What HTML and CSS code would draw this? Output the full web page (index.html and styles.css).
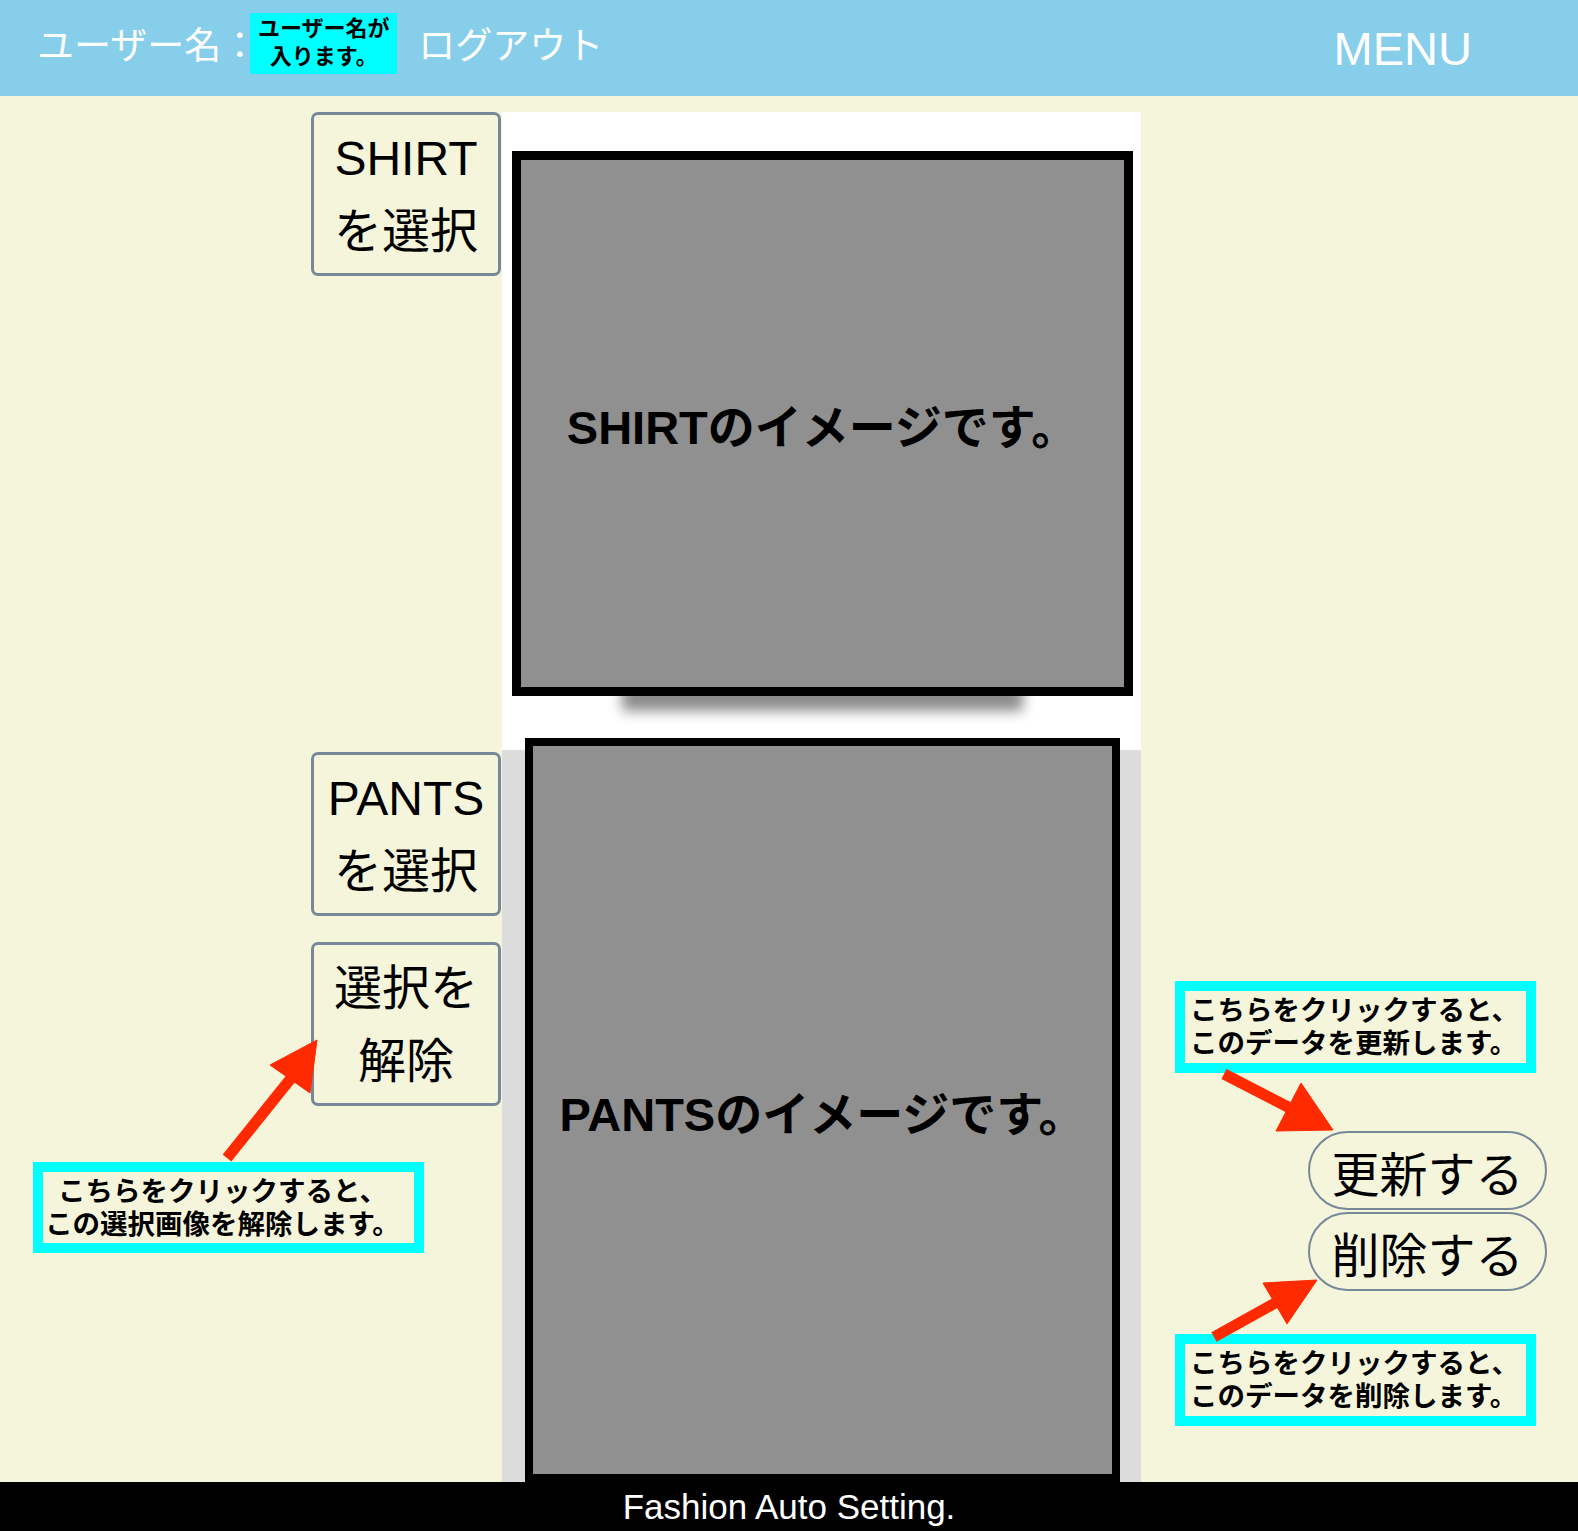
FILE: index.html
```html
<!DOCTYPE html>
<html lang="ja">
<head>
<meta charset="utf-8">
<title>Fashion Auto Setting</title>
<link rel="stylesheet" href="styles.css">
</head>
<body>
<header class="header">
  <span class="user-label">ユーザー名：</span>
  <div class="user-name">ユーザー名が<br>入ります。</div>
  <span class="logout">ログアウト</span>
  <span class="menu">MENU</span>
</header>
<main class="main">
  <div class="left">
    <div class="sel-btn">SHIRT<br>を選択</div>
    <div class="sel-btn pants-btn">PANTS<br>を選択</div>
    <div class="sel-btn clear-btn">選択を<br>解除</div>
    <div class="note note-left">こちらをクリックすると、<br>この選択画像を解除します。</div>
  </div>
  <div class="center">
    <div class="shirt-area">
      <div class="image-box shirt-box">SHIRTのイメージです。</div>
    </div>
    <div class="pants-area">
      <div class="image-box pants-box">PANTSのイメージです。</div>
    </div>
  </div>
  <div class="right">
    <div class="note note-right note-update">こちらをクリックすると、<br>このデータを更新します。</div>
    <div class="pill update-btn">更新する</div>
    <div class="pill delete-btn">削除する</div>
    <div class="note note-right note-delete">こちらをクリックすると、<br>このデータを削除します。</div>
  </div>
</main>
<footer class="footer">Fashion Auto Setting.</footer>
<svg class="arrows" width="1578" height="1531" viewBox="0 0 1578 1531" aria-hidden="true">
  <g fill="#ff2a00" stroke="#ff2a00">
    <line x1="227" y1="1158" x2="292" y2="1077" stroke-width="11"/>
    <polygon points="317,1040 270,1065 310,1093" stroke-width="1"/>
    <line x1="1224" y1="1074" x2="1290" y2="1108" stroke-width="11"/>
    <polygon points="1333,1130 1276,1131 1301,1083" stroke-width="1"/>
    <line x1="1214" y1="1337" x2="1277" y2="1302" stroke-width="11"/>
    <polygon points="1317,1280 1263,1283 1287,1324" stroke-width="1"/>
  </g>
</svg>
</body>
</html>
```
FILE: styles.css
```css
* {
  box-sizing: border-box;
}

body {
  margin: 0;
  width: 1578px;
  height: 1531px;
  overflow: hidden;
  position: relative;
  background: #f5f5dc;
  color: #000;
  font-family: "Liberation Sans", "Noto Sans CJK JP", sans-serif;
}

/* header */
.header {
  height: 96px;
  background: #87ceeb;
  display: flex;
  align-items: center;
  padding-left: 37px;
  color: #fff;
}

.user-label {
  font-size: 37px;
  line-height: 1;
  margin-top: -3px;
}

.user-name {
  align-self: flex-start;
  margin-top: 13px;
  margin-left: -8px;
  width: 147px;
  height: 61px;
  padding-top: 2px;
  background: #00ffff;
  color: #000;
  font-size: 22px;
  font-weight: 700;
  line-height: 28px;
  text-align: center;
}

.logout {
  margin-left: 21px;
  font-size: 37px;
  line-height: 1;
  margin-top: -3px;
}

.menu {
  margin-left: auto;
  margin-right: 106px;
  font-size: 47px;
  line-height: 1;
}

/* main */
.main {
  display: grid;
  grid-template-columns: 502px 639px 1fr;
  padding-top: 16px;
  height: 1386px;
}

.left,
.right,
.center {
  display: flex;
  flex-direction: column;
  min-height: 0;
}

.sel-btn {
  margin-left: 311px;
  width: 190px;
  height: 164px;
  padding-top: 7px;
  border: 3px solid #778899;
  border-radius: 7px;
  font-size: 48px;
  line-height: 73px;
  text-align: center;
}

.pants-btn {
  margin-top: 476px;
}

.clear-btn {
  margin-top: 26px;
}

.note {
  border: 10px solid #00ffff;
  font-size: 27.5px;
  font-weight: 700;
  line-height: 33px;
}

.note-left {
  margin-top: 56px;
  margin-left: 33px;
  width: 391px;
  height: 91px;
  padding: 3px 12px 0 0;
  text-align: center;
}

.note-right {
  margin-left: 34px;
  width: 361px;
  height: 92px;
  padding: 3px 0 0 5px;
  white-space: nowrap;
}

.note-update {
  margin-top: 869px;
}

.note-delete {
  margin-top: 43px;
}

.pill {
  margin-left: 167px;
  width: 239px;
  height: 79px;
  border: 2px solid #778899;
  border-radius: 40px;
  font-size: 48px;
  display: flex;
  align-items: center;
  justify-content: center;
}

.update-btn {
  margin-top: 58px;
}

.delete-btn {
  margin-top: 2px;
}

/* center images */
.shirt-area {
  height: 638px;
  flex: none;
  background: #fff;
  padding: 39px 0 0 10px;
}

.image-box {
  background: #909090;
  display: flex;
  align-items: center;
  justify-content: center;
  font-size: 47px;
  font-weight: 700;
}

.shirt-box {
  width: 621px;
  height: 545px;
  border: 9px solid #000;
  box-shadow: 0 125px 12px -110px rgba(0, 0, 0, 0.45);
}

.pants-area {
  flex: 1;
  background: #dcdcdc;
  padding-left: 23px;
}

.pants-box {
  width: 595px;
  height: 744px;
  margin-top: -12px;
  border: 8px solid #000;
}

/* footer */
.footer {
  height: 49px;
  background: #000;
  color: #fff;
  font-size: 35px;
  line-height: 49px;
  text-align: center;
}

.arrows {
  position: absolute;
  top: 0;
  left: 0;
  pointer-events: none;
}
```
